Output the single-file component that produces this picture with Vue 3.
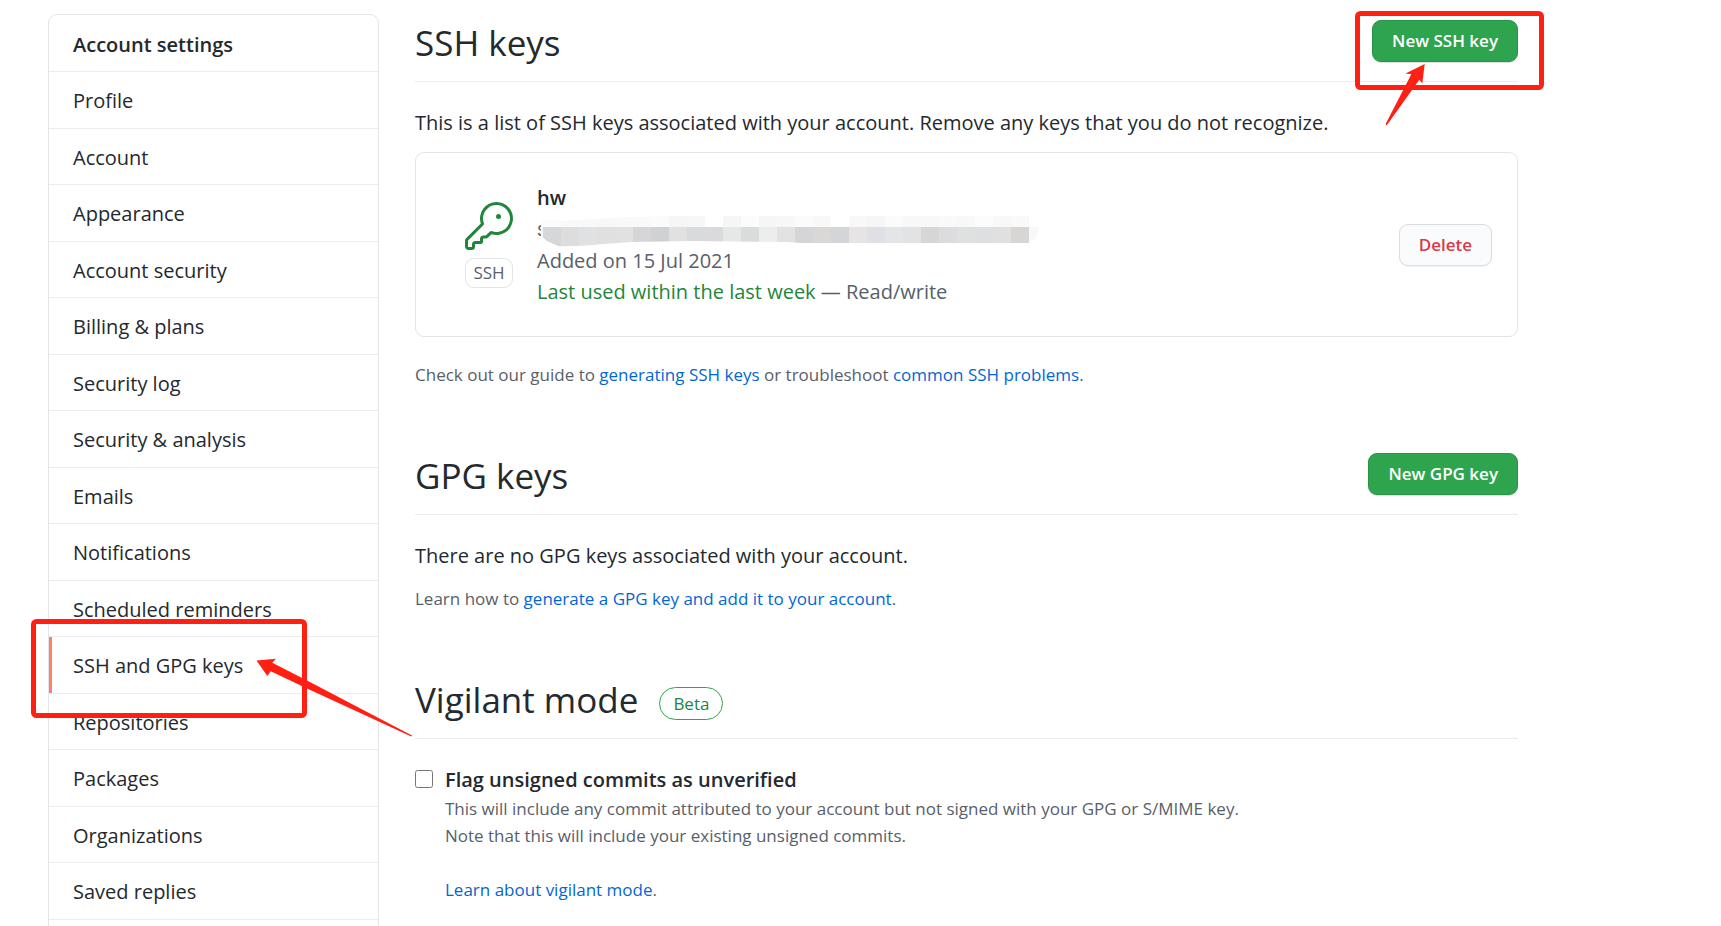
<script setup>
import { ref } from 'vue'

const navItems = [
  'Profile',
  'Account',
  'Appearance',
  'Account security',
  'Billing & plans',
  'Security log',
  'Security & analysis',
  'Emails',
  'Notifications',
  'Scheduled reminders',
  'SSH and GPG keys',
  'Repositories',
  'Packages',
  'Organizations',
  'Saved replies',
]
const current = 'SSH and GPG keys'
const flagUnsigned = ref(false)

const mosaic = [
  '#d6d7d9', '#dddddd', '#e0e1e3', '#e0e0e1', '#e1e1e1', '#d6d6d8', '#d0d1d3',
  '#e1e1e1', '#d9dadc', '#dadadc', '#e6e8e7', '#dadcdb', '#ebeeed', '#e2e2e2',
  '#d5d5d9', '#dad8d7', '#d4d5d9', '#e7e5e3', '#dee0e5', '#e3e5e7', '#e1e3e5',
  '#d6d6d6', '#dcdcde', '#dee1e0', '#dddfe1', '#e0e0e0', '#d7d6d5',
]
const haze = [
  '#fbfbfb', '#f9f9f9', '#f9f9f9', '#f8f8f8', '#f9f9f9', '#f9f9f9', '#fbfbfb',
  '#f6f6f6', '#f7f7f7', '#ffffff', '#f6f6f6', '#fcfcfc', '#f6f6f6', '#f7f7f7',
  '#fbfbfb', '#f8f8f8', '#ffffff', '#f8f8f8', '#f6f6f6', '#fbfbfb', '#f8f8f8',
  '#f8f8f8', '#f9f9f9', '#f8f8f8', '#fcfcfc', '#f8f8f8', '#f9f9f9',
]
</script>

<template>
  <div class="page">
    <nav class="menu" aria-label="Account settings">
      <h3 class="menu-title">Account settings</h3>
      <ul class="menu-list">
        <li v-for="item in navItems" :key="item" :class="{ selected: item === current }">
          <a href="#" :aria-current="item === current ? 'page' : undefined">{{ item }}</a>
          <svg v-if="item === current" class="mark mark-nav" width="382" height="120" viewBox="0 0 382 120" aria-hidden="true">
            <rect x="2.5" y="2.5" width="271" height="94" rx="3" fill="none" stroke="#ff2013" stroke-width="5" />
            <path d="M225.5 41.5 L245 39.7 L241.3 43.8 L276 61.5 L381 116.5 L380.3 117.6 L276 69.5 L239.8 52.2 L236.3 57 Z" fill="#ff2013" />
          </svg>
        </li>
      </ul>
    </nav>

    <main class="content">
      <section>
        <header class="head">
          <h2>SSH keys</h2>
          <div class="action">
            <button type="button" class="btn btn-primary">New SSH key</button>
            <svg class="mark mark-button" width="189" height="116" viewBox="0 0 189 116" aria-hidden="true">
              <rect x="2.5" y="2.5" width="184" height="74" rx="3" fill="none" stroke="#ff2013" stroke-width="5" />
              <path d="M69.7 53 L50.5 62.5 L56.3 63.3 L30.5 113.3 L31.8 114.2 L64.3 68.7 L67.3 72.5 Z" fill="#ff2013" />
            </svg>
          </div>
        </header>
        <p class="lead">This is a list of SSH keys associated with your account. Remove any keys that you do not recognize.</p>

        <div class="card">
          <div class="kind">
            <svg width="48" height="48" viewBox="0 0 24 24" fill="#22863a" aria-hidden="true">
              <path d="M16.75 8.5a1.25 1.25 0 100-2.5 1.25 1.25 0 000 2.5z" />
              <path fill-rule="evenodd" d="M15.75 0a8.25 8.25 0 00-7.851 10.79L.513 18.178A1.75 1.75 0 000 19.414v2.836C0 23.217.784 24 1.75 24h1.5A1.75 1.75 0 005 22.25v-1a.25.25 0 01.25-.25h2.735a.75.75 0 00.545-.22l.214-.213A.875.875 0 009 19.948V18.5a.25.25 0 01.25-.25h1.086c.464 0 .91-.184 1.237-.513l1.636-1.636A8.25 8.25 0 1015.75 0zM9 8.25a6.75 6.75 0 114.288 6.287.75.75 0 00-.804.168l-1.971 1.972a.25.25 0 01-.177.073H9.25A1.75 1.75 0 007.5 18.5v1H5.25a1.75 1.75 0 00-1.75 1.75v1a.25.25 0 01-.25.25h-1.5a.25.25 0 01-.25-.25v-2.836a.25.25 0 01.073-.177l7.722-7.721a.75.75 0 00.168-.804A6.73 6.73 0 019 8.25z" />
            </svg>
            <span class="tag">SSH</span>
          </div>
          <div class="details">
            <strong>hw</strong>
            <div class="fingerprint">
              <code>S</code>
              <svg class="mosaic" width="498" height="32" viewBox="0 0 498 32" aria-hidden="true">
                <defs>
                  <clipPath id="smear">
                    <path d="M0 8 Q2 4 8 4 L24 5 L56 3 L94 1 L150 0 H488 V11 H498 Q497 24 488 27 H260 L246 26 L150 25 L90 26 L62 28 Q30 31 17 30 L6 25 L0 20 Z" />
                  </clipPath>
                </defs>
                <rect width="12" height="12" fill="#ffffff" />
                <g clip-path="url(#smear)">
                  <rect width="498" height="32" fill="#f7f8fa" />
                  <rect v-for="(fill, i) in haze" :key="'h' + i" :x="2 + i * 18" y="0" width="18" height="11" :fill="fill" />
                  <rect v-for="(fill, i) in mosaic" :key="'m' + i" :x="2 + i * 18" y="11" width="18" height="21" :fill="fill" />
                </g>
              </svg>
            </div>
            <span>Added on 15 Jul 2021</span>
            <span><span class="recent">Last used within the last week</span> — Read/write</span>
          </div>
          <button type="button" class="btn btn-danger">Delete</button>
        </div>

        <p class="note after-card">Check out our guide to <a href="#">generating SSH keys</a> or troubleshoot <a href="#">common SSH problems</a>.</p>
      </section>

      <section>
        <header class="head">
          <h2>GPG keys</h2>
          <button type="button" class="btn btn-primary">New GPG key</button>
        </header>
        <p class="lead">There are no GPG keys associated with your account.</p>
        <p class="note">Learn how to <a href="#">generate a GPG key and add it to your account</a>.</p>
      </section>

      <section>
        <header class="head head-start">
          <h2>Vigilant mode</h2>
          <span class="beta">Beta</span>
        </header>
        <div class="option">
          <input id="flag-unsigned" v-model="flagUnsigned" type="checkbox" aria-describedby="flag-help" />
          <div>
            <label for="flag-unsigned">Flag unsigned commits as unverified</label>
            <p id="flag-help" class="help">
              This will include any commit attributed to your account but not signed with your GPG or S/MIME key.<br />
              Note that this will include your existing unsigned commits.
            </p>
            <p class="help more"><a href="#">Learn about vigilant mode</a>.</p>
          </div>
        </div>
      </section>
    </main>
  </div>
</template>

<style>
body {
  background: #ffffff;
}
</style>

<style scoped>
.page {
  box-sizing: border-box;
  display: grid;
  grid-template-columns: 331px minmax(0, 1fr);
  gap: 36px;
  max-width: 1518px;
  min-height: 100vh;
  padding: 14px 0 0 48px;
  color: #24292e;
  font-family: "Open Sans", "Noto Sans", sans-serif;
  font-size: 20px;
  line-height: 32px;
}

h2,
h3,
p,
ul {
  margin: 0;
  padding: 0;
}

a {
  color: #0366d6;
  text-decoration: none;
}

.menu {
  border: 1px solid #e1e4e8;
  border-bottom: 0;
  border-radius: 9px 9px 0 0;
}

.menu-title {
  box-sizing: border-box;
  height: 57px;
  padding: 14px 24px 10px;
  border-bottom: 1px solid #eaecef;
  font-size: 20px;
  font-weight: 600;
  line-height: 32px;
}

.menu-list {
  list-style: none;
}

.menu-list li {
  position: relative;
  box-sizing: border-box;
  height: 57px;
  border-bottom: 1px solid #eaecef;
}

.menu-list li:nth-child(even) {
  height: 56px;
}

.menu-list a {
  display: block;
  padding: 13px 24px 10px;
  color: #24292e;
}

.menu-list .selected::before {
  content: "";
  position: absolute;
  inset: 0 auto 0 0;
  width: 3px;
  background: #f9826c;
}

.mark {
  position: absolute;
  z-index: 2;
  pointer-events: none;
}

.mark-nav {
  top: -18px;
  left: -18px;
}

.mark-button {
  top: -9px;
  right: -26px;
}

.content {
  padding-bottom: 16px;
}

.content section + section {
  margin-top: 59px;
}

.head {
  box-sizing: border-box;
  display: flex;
  align-items: flex-start;
  justify-content: space-between;
  height: 68px;
  padding-top: 6px;
  border-bottom: 1px solid #eaecef;
}

.head-start {
  justify-content: flex-start;
  gap: 21px;
}

.head h2 {
  font-size: 35px;
  font-weight: 400;
  line-height: 46px;
}

.action {
  position: relative;
  display: flex;
}

.btn {
  box-sizing: border-box;
  height: 42px;
  padding: 0 19px;
  border: 1px solid;
  border-radius: 9px;
  font-family: inherit;
  font-size: 17px;
  font-weight: 600;
  line-height: 30px;
  white-space: nowrap;
  cursor: pointer;
}

.btn-primary {
  border-color: #2b9249;
  background: #2ea44f;
  box-shadow: 0 1px 1px rgba(27, 31, 35, 0.15);
  color: #ffffff;
}

.btn-danger {
  margin-left: auto;
  border-color: #dadcde;
  background: #fafbfc;
  box-shadow: 0 1px 1px rgba(27, 31, 35, 0.06);
  color: #d73a49;
}

.lead {
  margin: 25px 0 13px;
}

.card {
  display: flex;
  align-items: center;
  gap: 24px;
  padding: 29px 25px 29px 49px;
  border: 1px solid #e1e4e8;
  border-radius: 9px;
}

.kind {
  display: flex;
  flex-direction: column;
  align-items: center;
  gap: 8px;
}

.kind svg {
  display: block;
}

.tag {
  box-sizing: border-box;
  width: 48px;
  height: 30px;
  border: 1px solid #e1e4e8;
  border-radius: 9px;
  color: #586069;
  font-size: 17px;
  line-height: 28px;
  text-align: center;
}

.details {
  display: flex;
  flex-direction: column;
  color: #586069;
  line-height: 31px;
}

.details strong {
  color: #24292e;
  font-weight: 600;
}

.fingerprint {
  position: relative;
  height: 32px;
}

.fingerprint code {
  font-family: "Liberation Mono", monospace;
  font-size: 17px;
}

.mosaic {
  position: absolute;
  top: 3px;
  left: 4px;
}

.recent {
  color: #22863a;
}

.note,
.help {
  color: #586069;
  font-size: 17px;
  line-height: 27px;
}

.after-card {
  margin-top: 24px;
}

.beta {
  box-sizing: border-box;
  height: 33px;
  margin-top: 10px;
  padding: 0 13px;
  border: 1px solid #2ea44f;
  border-radius: 17px;
  color: #22863a;
  font-size: 17px;
  line-height: 32px;
}

.option {
  display: flex;
  align-items: flex-start;
  gap: 12px;
  margin-top: 25px;
}

.option input {
  flex: none;
  width: 18px;
  height: 18px;
  margin: 6px 0 0;
}

.option label {
  display: block;
  font-weight: 600;
  line-height: 31px;
}

.more {
  margin-top: 27px;
}
</style>
